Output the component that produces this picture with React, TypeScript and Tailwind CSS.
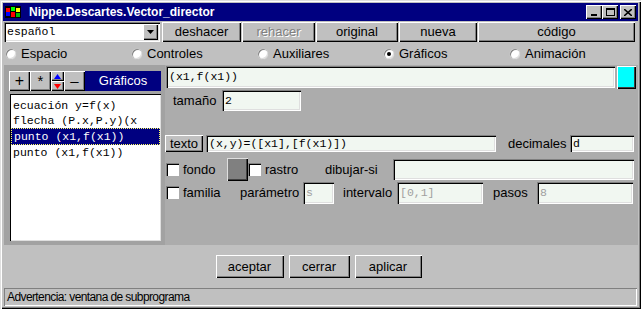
import React from "react";

const raised =
  "bg-[#c0c0c0] shadow-[inset_1px_1px_#ffffff,inset_-1px_-1px_#000000,inset_-2px_-2px_#808080]";
const sunken =
  "bg-[#f1f7f1] shadow-[inset_1px_1px_#808080,inset_2px_2px_#000000,inset_-1px_-1px_#ffffff,inset_-2px_-2px_#dfdfdf]";
const sans = "font-['Liberation_Sans',Arial,sans-serif]";
const mono = "font-['Liberation_Mono','Courier_New',monospace]";

function Btn({ label, w, h = "h-[20px]", disabled = false, size = "text-[13px]" }: { label: string; w: string; h?: string; disabled?: boolean; size?: string }) {
  return (
    <div
      className={`${raised} ${w} ${h} flex items-center justify-center ${size} ${sans} ${
        disabled ? "text-[#808080] [text-shadow:1px_1px_#ffffff]" : "text-black"
      }`}
    >
      {label}
    </div>
  );
}

function Field({ value, w, h = "h-[21px]", muted = false }: { value: string; w: string; h?: string; muted?: boolean }) {
  return (
    <div
      className={`${sunken} ${w} ${h} flex items-center pl-[3px] text-[11.5px] ${mono} ${
        muted ? "text-[#a0a0a0]" : "text-black"
      }`}
    >
      {value}
    </div>
  );
}

function Radio({ label, checked = false }: { label: string; checked?: boolean }) {
  return (
    <div className={`flex items-center gap-[4px] text-[13px] ${sans}`}>
      <div className="w-[12px] h-[12px] rounded-full bg-white shadow-[inset_1px_1px_#808080,inset_-1px_-1px_#dfdfdf] border border-[#c0c0c0] flex items-center justify-center">
        {checked && <div className="w-[4px] h-[4px] rounded-full bg-black" />}
      </div>
      <span>{label}</span>
    </div>
  );
}

function Check() {
  return (
    <div className="w-[13px] h-[13px] bg-white shadow-[inset_1px_1px_#808080,inset_2px_2px_#000000,inset_-1px_-1px_#ffffff]" />
  );
}

export default function App() {
  return (
    <div className={`w-[641px] h-[309px] bg-[#c0c0c0] p-[3px] flex flex-col ${sans} shadow-[inset_1px_1px_#dfdfdf,inset_2px_2px_#ffffff,inset_-1px_-1px_#000000,inset_-2px_-2px_#808080] overflow-hidden`}>
      {/* Title bar */}
      <div className="h-[18px] bg-[#000080] flex items-center pl-[2px] pr-[2px] shrink-0">
        <svg width="16" height="14" viewBox="0 0 16 14" className="mr-[8px]">
          <rect x="0" y="1" width="16" height="12" fill="#000000" />
          <rect x="1" y="3" width="4" height="4" fill="#ff0000" />
          <rect x="1" y="7" width="4" height="4" fill="#0000ff" />
          <rect x="6" y="2" width="4" height="4" fill="#00ff00" />
          <rect x="6" y="7" width="4" height="5" fill="#ff0000" />
          <rect x="11" y="3" width="4" height="4" fill="#ffff00" />
          <rect x="11" y="8" width="4" height="4" fill="#00c000" />
        </svg>
        <span className="text-white font-bold text-[12px]">Nippe.Descartes.Vector_director</span>
        <div className="ml-auto flex items-center">
          <div className={`${raised} w-[16px] h-[14px] flex items-end justify-center pb-[3px]`}>
            <div className="w-[6px] h-[2px] bg-black" />
          </div>
          <div className={`${raised} w-[16px] h-[14px] flex items-center justify-center`}>
            <div className="w-[9px] h-[8px] border border-black border-t-2" />
          </div>
          <div className={`${raised} w-[16px] h-[14px] ml-[2px] flex items-center justify-center`}>
            <svg width="8" height="7" viewBox="0 0 8 7">
              <path d="M0 0 L8 7 M8 0 L0 7" stroke="#000" strokeWidth="1.6" />
            </svg>
          </div>
        </div>
      </div>

      {/* Combo + toolbar */}
      <div className="flex mt-[1px] ml-[1px] h-[20px] shrink-0">
        <div className={`${sunken} !bg-white w-[156px] h-[20px] flex items-center pl-[3px] text-[11.5px] ${mono}`}>
          español
          <div className={`${raised} ml-auto mr-[2px] w-[15px] h-[16px] flex items-center justify-center`}>
            <svg width="7" height="4" viewBox="0 0 7 4">
              <path d="M0 0 H7 L3.5 4 Z" fill="#000" />
            </svg>
          </div>
        </div>
        <div className="w-[2px]" />
        <Btn label="deshacer" w="w-[79px]" />
        <div className="w-[1px]" />
        <Btn label="rehacer" w="w-[73px]" disabled />
        <div className="w-[1px]" />
        <Btn label="original" w="w-[82px]" />
        <div className="w-[1px]" />
        <Btn label="nueva" w="w-[78px]" />
        <div className="w-[1px]" />
        <Btn label="código" w="w-[157px]" />
      </div>

      {/* Radio row */}
      <div className="grid grid-cols-[126px_126px_126px_126px_126px] ml-[2px] h-[23px] items-center shrink-0">
        <Radio label="Espacio" />
        <Radio label="Controles" />
        <Radio label="Auxiliares" />
        <Radio label="Gráficos" checked />
        <Radio label="Animación" />
      </div>

      {/* Main panel */}
      <div className="flex h-[180px] ml-[1px] bg-[#acacac] shrink-0">
        {/* Left panel */}
        <div className="w-[161px] bg-[#a2a2a2] pt-[6px] pl-[5px] pr-[4px] pb-[4px] flex flex-col">
          <div className="flex h-[20px]">
            <Btn label="+" w="w-[21px]" size="text-[16px]" />
            <Btn label="*" w="w-[21px]" size="text-[15px]" />
            <div className="flex flex-col w-[13px]">
              <div className={`${raised} h-[10px] flex items-center justify-center`}>
                <svg width="7" height="5" viewBox="0 0 7 5"><path d="M3.5 0 L7 5 H0 Z" fill="#0000ff" /></svg>
              </div>
              <div className={`${raised} h-[10px] flex items-center justify-center`}>
                <svg width="7" height="5" viewBox="0 0 7 5"><path d="M0 0 H7 L3.5 5 Z" fill="#ff0000" /></svg>
              </div>
            </div>
            <Btn label="–" w="w-[21px]" size="text-[15px]" />
            <div className="flex-1 bg-[#000080] text-white text-[13px] flex items-center justify-center">Gráficos</div>
          </div>
          <div className={`mt-[3px] ml-[1px] flex-1 bg-white shadow-[inset_1px_1px_#000000,inset_-1px_-1px_#dfdfdf] pt-[4px] text-[11.5px] ${mono} leading-[15px]`}>
            <div className="pl-[3px]">ecuación y=f(x)</div>
            <div className="pl-[3px] whitespace-nowrap overflow-hidden">flecha (P.x,P.y)(x</div>
            <div className="pl-[2px] mx-[1px] bg-[#000080] text-white border border-dotted border-[#ffff60]">punto (x1,f(x1))</div>
            <div className="pl-[3px]">punto (x1,f(x1))</div>
          </div>
        </div>

        {/* Right panel */}
        <div className="flex-1 pl-[1px] pt-[1px] flex flex-col">
          <div className="flex items-start">
            <Field value="(x1,f(x1))" w="w-[449px]" h="h-[22px]" />
            <div className="ml-[2px] w-[19px] h-[23px] bg-[#00ffff] shadow-[inset_1px_1px_#ffffff,inset_-1px_-1px_#000000,inset_-2px_-2px_#404040]" />
          </div>
          <div className="flex items-center mt-[1px] h-[21px]">
            <span className="ml-[7px] w-[49px] text-[13px]">tamaño</span>
            <Field value="2" w="w-[79px]" />
          </div>

          <div className="flex items-center mt-[24px] h-[17px]">
            <div className="-ml-[1px]"><Btn label="texto" w="w-[38px]" h="h-[17px]" /></div>
            <div className="w-[3px]" />
            <Field value="(x,y)=([x1],[f(x1)])" w="w-[290px]" h="h-[17px]" />
            <span className="ml-[12px] w-[62px] text-[13px]">decimales</span>
            <Field value="d" w="w-[64px]" h="h-[17px]" />
          </div>

          <div className="flex items-center mt-[6px] h-[23px] text-[13px]">
            <Check />
            <span className="ml-[4px] w-[44px]">fondo</span>
            <div className="w-[21px] h-[23px] bg-[#808080] shadow-[inset_1px_1px_#dfdfdf,inset_-1px_-1px_#000000,inset_-2px_-2px_#404040]" />
            <Check />
            <span className="ml-[4px] w-[60px]">rastro</span>
            <span className="w-[68px]">dibujar-si</span>
            <Field value="" w="w-[241px]" />
          </div>

          <div className="flex items-center mt-[0px] h-[23px] text-[13px]">
            <Check />
            <span className="ml-[4px] w-[57px]">familia</span>
            <span className="w-[63px]">parámetro</span>
            <Field value="s" w="w-[31px]" h="h-[22px]" muted />
            <span className="ml-[9px] w-[54px]">intervalo</span>
            <Field value="[0,1]" w="w-[86px]" h="h-[22px]" muted />
            <span className="ml-[10px] w-[44px]">pasos</span>
            <Field value="8" w="w-[96px]" h="h-[22px]" muted />
          </div>
        </div>
      </div>

      {/* Bottom buttons */}
      <div className="flex justify-center items-center gap-[5px] mt-[10px] h-[23px] shrink-0 pr-[4px]">
        <Btn label="aceptar" w="w-[68px]" h="h-[23px]" />
        <Btn label="cerrar" w="w-[61px]" h="h-[23px]" />
        <Btn label="aplicar" w="w-[67px]" h="h-[23px]" />
      </div>

      {/* Status bar */}
      <div className="mt-[10px] ml-[1px] mr-[1px] h-[18px] flex items-center pl-[3px] text-[12px] tracking-[-0.6px] shadow-[inset_1px_1px_#808080,inset_-1px_-1px_#ffffff]">
        Advertencia: ventana de subprograma
      </div>
    </div>
  );
}
